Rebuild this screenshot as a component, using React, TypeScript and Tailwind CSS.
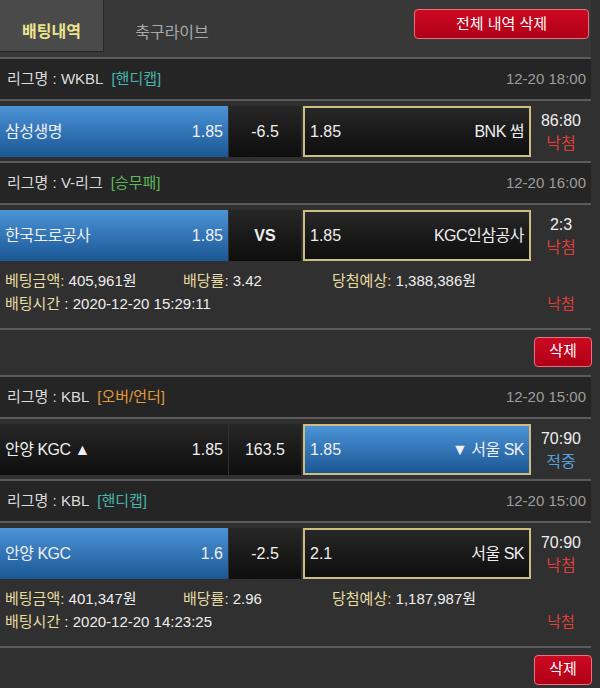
import React from "react";

type Bet = {
  league: string;
  type: string;
  typeColor: string;
  date: string;
  home: string;
  homeOdds: string;
  mid: string;
  away: string;
  awayOdds: string;
  pick: "home" | "away";
  score: string;
  result: string;
};

type Group = {
  bets: Bet[];
  amount: string;
  rate: string;
  expected: string;
  time: string;
  result: string;
};

const groups: Group[] = [
  {
    bets: [
      {
        league: "WKBL",
        type: "핸디캡",
        typeColor: "text-[#45b6ac]",
        date: "12-20 18:00",
        home: "삼성생명",
        homeOdds: "1.85",
        mid: "-6.5",
        away: "BNK 썸",
        awayOdds: "1.85",
        pick: "home",
        score: "86:80",
        result: "낙첨",
      },
      {
        league: "V-리그",
        type: "승무패",
        typeColor: "text-[#5cb85c]",
        date: "12-20 16:00",
        home: "한국도로공사",
        homeOdds: "1.85",
        mid: "VS",
        away: "KGC인삼공사",
        awayOdds: "1.85",
        pick: "home",
        score: "2:3",
        result: "낙첨",
      },
    ],
    amount: "405,961원",
    rate: "3.42",
    expected: "1,388,386원",
    time: "2020-12-20 15:29:11",
    result: "낙첨",
  },
  {
    bets: [
      {
        league: "KBL",
        type: "오버/언더",
        typeColor: "text-[#e39a3b]",
        date: "12-20 15:00",
        home: "안양 KGC ▲",
        homeOdds: "1.85",
        mid: "163.5",
        away: "▼ 서울 SK",
        awayOdds: "1.85",
        pick: "away",
        score: "70:90",
        result: "적중",
      },
      {
        league: "KBL",
        type: "핸디캡",
        typeColor: "text-[#45b6ac]",
        date: "12-20 15:00",
        home: "안양 KGC",
        homeOdds: "1.6",
        mid: "-2.5",
        away: "서울 SK",
        awayOdds: "2.1",
        pick: "home",
        score: "70:90",
        result: "낙첨",
      },
    ],
    amount: "401,347원",
    rate: "2.96",
    expected: "1,187,987원",
    time: "2020-12-20 14:23:25",
    result: "낙첨",
  },
];

function ResultText({ result }: { result: string }) {
  return (
    <span className={result === "적중" ? "text-[#5a9fdc]" : "text-[#dc3f3c]"}>{result}</span>
  );
}

function BetRow({ bet }: { bet: Bet }) {
  const blue = "bg-linear-to-b from-[#4b94d7] to-[#1b5795]";
  const dark = "bg-linear-to-b from-[#272727] to-[#0e0e0e]";

  return (
    <>
      <div className="flex h-[42px] items-center justify-between border-t-2 border-[#5b5b5b] bg-[#252525] pl-[7px] pr-[5px] text-[15px]">
        <div className="text-[#dcdcdc]">
          리그명 : {bet.league}
          <span className={`ml-[8px] ${bet.typeColor}`}>[{bet.type}]</span>
        </div>
        <div className="text-[#9d9d9d]">{bet.date}</div>
      </div>
      <div className="flex border-t-2 border-[#5b5b5b] pt-[5px] pb-[4px] text-[16px] text-[#efefef]">
        <div
          className={`flex h-[51px] w-[228px] items-center justify-between pl-[5px] pr-[5px] ${
            bet.pick === "home" ? blue : dark
          }`}
        >
          <span className="tracking-[-0.5px]">{bet.home}</span>
          <span>{bet.homeOdds}</span>
        </div>
        <div
          className={`ml-[1px] flex h-[51px] w-[72px] items-center justify-center ${dark} ${
            bet.mid === "VS" ? "font-bold" : ""
          }`}
        >
          {bet.mid}
        </div>
        <div
          className={`ml-[2px] flex h-[51px] w-[228px] items-center justify-between border-2 border-[#cdbd80] pl-[5px] pr-[5px] ${
            bet.pick === "away" ? blue : dark
          }`}
        >
          <span>{bet.awayOdds}</span>
          <span className="tracking-[-0.5px]">{bet.away}</span>
        </div>
        <div className="flex w-[60px] flex-col items-center justify-center leading-[23px]">
          <span>{bet.score}</span>
          <ResultText result={bet.result} />
        </div>
      </div>
    </>
  );
}

function DeleteButton({ label, className }: { label: string; className?: string }) {
  return (
    <button
      className={`rounded-[4px] border-[1.5px] border-[#e8707f] bg-linear-to-b from-[#cc0a22] to-[#b00016] text-[15px] text-white ${className ?? ""}`}
    >
      {label}
    </button>
  );
}

export default function App() {
  return (
    <div className="min-h-[688px] w-[600px] bg-[#303030] font-['Liberation_Sans','Noto_Sans_CJK_KR',sans-serif]">
      <div className="w-[591px]">
        <div className="flex h-[57px] items-start bg-[#383838]">
          <div className="flex h-[52px] w-[104px] items-center justify-center border-r border-b border-[#262626] bg-[#4a4a4a] pt-[13px] text-[16px] font-bold text-[#e9e48c]">
            배팅내역
          </div>
          <div className="flex h-[52px] w-[136px] items-center justify-center pt-[13px] text-[16px] text-[#a8a8a8]">
            축구라이브
          </div>
          <div className="ml-auto pt-[9px] pr-[2px]">
            <DeleteButton label="전체 내역 삭제" className="h-[30px] w-[175px]" />
          </div>
        </div>

        {groups.map((group, gi) => (
          <div key={gi}>
            {group.bets.map((bet, bi) => (
              <BetRow key={bi} bet={bet} />
            ))}
            <div className="flex pt-[4px] pb-[13px] text-[15px] leading-[23px] text-[#eeeeee]">
              <div className="flex-1 pl-[5px]">
                <div className="flex">
                  <span className="w-[178px]">
                    <span className="text-[#e6dca2]">베팅금액:</span> {group.amount}
                  </span>
                  <span className="w-[149px]">
                    <span className="text-[#e6dca2]">배당률:</span> {group.rate}
                  </span>
                  <span>
                    <span className="text-[#e6dca2]">당첨예상:</span> {group.expected}
                  </span>
                </div>
                <div>
                  <span className="text-[#e6dca2]">배팅시간</span> : {group.time}
                </div>
              </div>
              <div className="flex w-[60px] flex-col items-center justify-end">
                <ResultText result={group.result} />
              </div>
            </div>
            <div className="flex h-[47px] items-center justify-end border-t-2 border-[#5b5b5b] pb-[2px]">
              <DeleteButton label="삭제" className="-mr-[1px] h-[30px] w-[58px]" />
            </div>
          </div>
        ))}
      </div>
    </div>
  );
}
